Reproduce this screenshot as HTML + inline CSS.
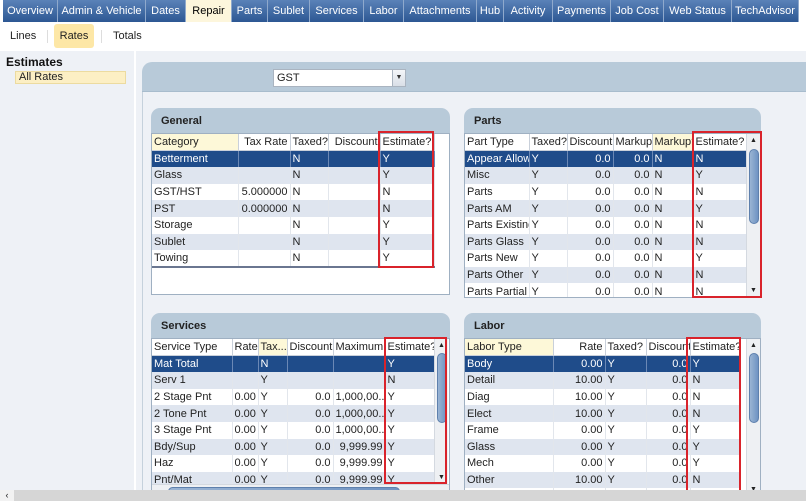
<!DOCTYPE html>
<html><head><meta charset="utf-8"><style>
*{box-sizing:border-box;margin:0;padding:0}
body{width:806px;height:501px;overflow:hidden;background:#fff;font-family:"Liberation Sans",Arial,sans-serif;font-size:11px;color:#222;position:relative}
.abs{position:absolute}
.tabs{left:0;top:0;width:806px;height:22px;background:#fff}
.tab{position:absolute;top:0;height:22px;line-height:22px;text-align:center;color:#fff;font-size:11px;background:linear-gradient(#5a82b8,#2d5793);border-right:1px solid #8fa9cc}
.tab.act{background:#fdf6dc;color:#000}
.sub{top:22px;left:0;width:806px;height:29px;background:#fff}
.left{left:0;top:51px;width:134px;height:450px;background:#eef1f6}
.content{left:136px;top:51px;width:670px;height:450px;background:#eef1f6}
.band{left:142px;top:62px;width:664px;height:30px;background:#b8cad9;border-radius:10px 0 0 0;border-bottom:1px solid #a8bccd}
.panel{left:142px;top:92px;width:664px;height:409px;background:#eef1f6;border-left:1px solid #c5d1dc}
.box{position:absolute;background:#b8cad9;border-radius:9px 9px 0 0;height:26px;font-weight:bold;padding-left:10px;line-height:26px}
.grid{position:absolute;background:#fff;border:1px solid #9fb0c2;overflow:hidden}
table{border-collapse:collapse;table-layout:fixed;font-size:11px}
td{height:16.6px;padding:0 2px;white-space:nowrap;overflow:hidden;border-right:1px solid #e2e6ec;line-height:16px}
tr.h td{background:#fff;border-right:1px solid #c9d0da;border-bottom:1px solid #c9d0da}
tr:nth-child(odd):not(.h) td{background:#dfe5ef}
tr.sel td{background:#1f4c8a!important;color:#fff;border-right-color:#6b88b5}
.r{text-align:right}
.y{background:#fdf8d8!important}
.red{position:absolute;border:2px solid #d9232b}
.sb{position:absolute;width:14px;background:#eef0f3;border-left:1px solid #d4d9e0}
.thumb{position:absolute;left:2px;width:10px;border-radius:5px;background:linear-gradient(90deg,#9ab4d4,#6f93c2);border:1px solid #5e80ad}
</style></head><body>
<div class="abs tabs">
<div class="tab" style="left:3px;width:55px">Overview</div>
<div class="tab" style="left:58px;width:88px">Admin &amp; Vehicle</div>
<div class="tab" style="left:146px;width:40px">Dates</div>
<div class="tab act" style="left:186px;width:46px">Repair</div>
<div class="tab" style="left:232px;width:36px">Parts</div>
<div class="tab" style="left:268px;width:42px">Sublet</div>
<div class="tab" style="left:310px;width:54px">Services</div>
<div class="tab" style="left:364px;width:40px">Labor</div>
<div class="tab" style="left:404px;width:73px">Attachments</div>
<div class="tab" style="left:477px;width:27px">Hub</div>
<div class="tab" style="left:504px;width:49px">Activity</div>
<div class="tab" style="left:553px;width:58px">Payments</div>
<div class="tab" style="left:611px;width:53px">Job Cost</div>
<div class="tab" style="left:664px;width:68px">Web Status</div>
<div class="tab" style="left:732px;width:67px">TechAdvisor</div>
</div>
<div class="abs sub">
<div class="abs" style="left:10px;top:8px">Lines</div>
<div class="abs" style="left:47px;top:8px;width:1px;height:13px;background:#ddd"></div>
<div class="abs" style="left:54px;top:2px;width:40px;height:24px;background:#fde7a6;border-radius:3px;text-align:center;line-height:24px">Rates</div>
<div class="abs" style="left:101px;top:8px;width:1px;height:13px;background:#ddd"></div>
<div class="abs" style="left:113px;top:8px">Totals</div>
</div>
<div class="abs left">
<div class="abs" style="left:6px;top:4px;font-weight:bold;font-size:12px;color:#111">Estimates</div>
<div class="abs" style="left:15px;top:20px;width:111px;height:13px;background:#fcefc4;border:1px solid #ecdba0;padding-left:3px;line-height:11px">All Rates</div>
</div>
<div class="abs content"></div>
<div class="abs band">
<div class="abs" style="left:131px;top:7px;width:133px;height:18px;background:#fff;border:1px solid #aab4c0;padding-left:3px;line-height:16px">GST</div>
<div class="abs" style="left:250px;top:8px;width:13px;height:16px;background:linear-gradient(#f4f6f9,#d9dfe7);border-left:1px solid #aab4c0;font-size:7px;text-align:center;line-height:16px;color:#333">▼</div>
</div>
<div class="abs panel"></div>

<!-- General -->
<div class="box" style="left:151px;top:108px;width:299px">General</div>
<div class="grid" style="left:151px;top:133px;width:299px;height:162px">
<table style="width:282px"><colgroup><col style="width:86px"><col style="width:52px"><col style="width:38px"><col style="width:52px"><col style="width:54px"></colgroup>
<tr class="h"><td class="y">Category</td><td class="r">Tax Rate</td><td>Taxed?</td><td class="r">Discount</td><td>Estimate?</td></tr>
<tr class="sel"><td>Betterment</td><td></td><td>N</td><td></td><td>Y</td></tr>
<tr><td>Glass</td><td></td><td>N</td><td></td><td>Y</td></tr>
<tr><td>GST/HST</td><td class="r">5.000000</td><td>N</td><td></td><td>N</td></tr>
<tr><td>PST</td><td class="r">0.000000</td><td>N</td><td></td><td>N</td></tr>
<tr><td>Storage</td><td></td><td>N</td><td></td><td>Y</td></tr>
<tr><td>Sublet</td><td></td><td>N</td><td></td><td>Y</td></tr>
<tr style="border-bottom:2px solid #6a7690"><td>Towing</td><td></td><td>N</td><td></td><td>Y</td></tr>
</table></div>
<div class="red" style="left:378px;top:131px;width:56px;height:137px"></div>

<!-- Parts -->
<div class="box" style="left:464px;top:108px;width:297px">Parts</div>
<div class="grid" style="left:464px;top:133px;width:297px;height:165px">
<table style="width:281px"><colgroup><col style="width:64px"><col style="width:38px"><col style="width:46px"><col style="width:39px"><col style="width:41px"><col style="width:53px"></colgroup>
<tr class="h"><td>Part Type</td><td>Taxed?</td><td class="r">Discount</td><td class="r">Markup</td><td class="y">Markup?</td><td>Estimate?</td></tr>
<tr class="sel"><td>Appear Allow</td><td>Y</td><td class="r">0.0</td><td class="r">0.0</td><td>N</td><td>N</td></tr>
<tr><td>Misc</td><td>Y</td><td class="r">0.0</td><td class="r">0.0</td><td>N</td><td>Y</td></tr>
<tr><td>Parts</td><td>Y</td><td class="r">0.0</td><td class="r">0.0</td><td>N</td><td>N</td></tr>
<tr><td>Parts AM</td><td>Y</td><td class="r">0.0</td><td class="r">0.0</td><td>N</td><td>Y</td></tr>
<tr><td>Parts Existing</td><td>Y</td><td class="r">0.0</td><td class="r">0.0</td><td>N</td><td>N</td></tr>
<tr><td>Parts Glass</td><td>Y</td><td class="r">0.0</td><td class="r">0.0</td><td>N</td><td>N</td></tr>
<tr><td>Parts New</td><td>Y</td><td class="r">0.0</td><td class="r">0.0</td><td>N</td><td>Y</td></tr>
<tr><td>Parts Other</td><td>Y</td><td class="r">0.0</td><td class="r">0.0</td><td>N</td><td>N</td></tr>
<tr><td>Parts Partial</td><td>Y</td><td class="r">0.0</td><td class="r">0.0</td><td>N</td><td>N</td></tr>
</table>
<div class="sb" style="left:281px;top:0;height:165px"><div style="font-size:7px;text-align:center;margin-top:3px">▲</div><div class="thumb" style="top:15px;height:75px"></div><div style="position:absolute;bottom:5px;width:13px;font-size:7px;text-align:center">▼</div></div>
</div>
<div class="red" style="left:692px;top:131px;width:70px;height:167px"></div>

<!-- Services -->
<div class="box" style="left:151px;top:313px;width:299px">Services</div>
<div class="grid" style="left:151px;top:338px;width:299px;height:160px">
<table style="width:282px"><colgroup><col style="width:80px"><col style="width:26px"><col style="width:29px"><col style="width:46px"><col style="width:52px"><col style="width:49px"></colgroup>
<tr class="h"><td>Service Type</td><td class="r">Rate</td><td class="y">Tax...</td><td class="r">Discount</td><td class="r">Maximum</td><td>Estimate?</td></tr>
<tr class="sel"><td>Mat Total</td><td></td><td>N</td><td></td><td></td><td>Y</td></tr>
<tr><td>Serv 1</td><td></td><td>Y</td><td></td><td></td><td>N</td></tr>
<tr><td>2 Stage Pnt</td><td class="r">0.00</td><td>Y</td><td class="r">0.0</td><td class="r">1,000,00...</td><td>Y</td></tr>
<tr><td>2 Tone Pnt</td><td class="r">0.00</td><td>Y</td><td class="r">0.0</td><td class="r">1,000,00...</td><td>Y</td></tr>
<tr><td>3 Stage Pnt</td><td class="r">0.00</td><td>Y</td><td class="r">0.0</td><td class="r">1,000,00...</td><td>Y</td></tr>
<tr><td>Bdy/Sup</td><td class="r">0.00</td><td>Y</td><td class="r">0.0</td><td class="r">9,999.99</td><td>Y</td></tr>
<tr><td>Haz</td><td class="r">0.00</td><td>Y</td><td class="r">0.0</td><td class="r">9,999.99</td><td>Y</td></tr>
<tr><td>Pnt/Mat</td><td class="r">0.00</td><td>Y</td><td class="r">0.0</td><td class="r">9,999.99</td><td>Y</td></tr>
</table>
<div class="sb" style="left:282px;top:0;height:145px"><div style="font-size:7px;text-align:center;margin-top:3px">▲</div><div class="thumb" style="top:14px;height:70px"></div><div style="position:absolute;bottom:3px;width:13px;font-size:7px;text-align:center">▼</div></div>
<div style="position:absolute;left:0;top:145px;width:297px;height:13px;background:#eef0f3;border-top:1px solid #d4d9e0"><div class="thumb" style="left:16px;top:2px;width:232px;height:9px"></div></div>
</div>
<div class="red" style="left:384px;top:337px;width:63px;height:147px"></div>

<!-- Labor -->
<div class="box" style="left:464px;top:313px;width:297px">Labor</div>
<div class="grid" style="left:464px;top:338px;width:297px;height:160px">
<table style="width:274px"><colgroup><col style="width:88px"><col style="width:52px"><col style="width:41px"><col style="width:44px"><col style="width:49px"></colgroup>
<tr class="h"><td class="y">Labor Type</td><td class="r">Rate</td><td>Taxed?</td><td class="r">Discount</td><td>Estimate?</td></tr>
<tr class="sel"><td>Body</td><td class="r">0.00</td><td>Y</td><td class="r">0.0</td><td>Y</td></tr>
<tr><td>Detail</td><td class="r">10.00</td><td>Y</td><td class="r">0.0</td><td>N</td></tr>
<tr><td>Diag</td><td class="r">10.00</td><td>Y</td><td class="r">0.0</td><td>N</td></tr>
<tr><td>Elect</td><td class="r">10.00</td><td>Y</td><td class="r">0.0</td><td>N</td></tr>
<tr><td>Frame</td><td class="r">0.00</td><td>Y</td><td class="r">0.0</td><td>Y</td></tr>
<tr><td>Glass</td><td class="r">0.00</td><td>Y</td><td class="r">0.0</td><td>Y</td></tr>
<tr><td>Mech</td><td class="r">0.00</td><td>Y</td><td class="r">0.0</td><td>Y</td></tr>
<tr><td>Other</td><td class="r">10.00</td><td>Y</td><td class="r">0.0</td><td>N</td></tr>
<tr><td>Paint</td><td class="r">0.00</td><td>Y</td><td class="r">0.0</td><td>N</td></tr>
</table>
<div class="sb" style="left:281px;top:0;height:160px"><div style="font-size:7px;text-align:center;margin-top:3px">▲</div><div class="thumb" style="top:14px;height:70px"></div><div style="position:absolute;bottom:6px;width:13px;font-size:7px;text-align:center">▼</div></div>
</div>
<div class="red" style="left:686px;top:337px;width:55px;height:160px"></div>

<div class="abs" style="left:0;top:490px;width:806px;height:11px;background:#d6d6d6"><div class="abs" style="left:0;top:0;width:14px;height:11px;background:#f2f2f2;font-size:9px;line-height:11px;text-align:center">‹</div></div>
</body></html>
